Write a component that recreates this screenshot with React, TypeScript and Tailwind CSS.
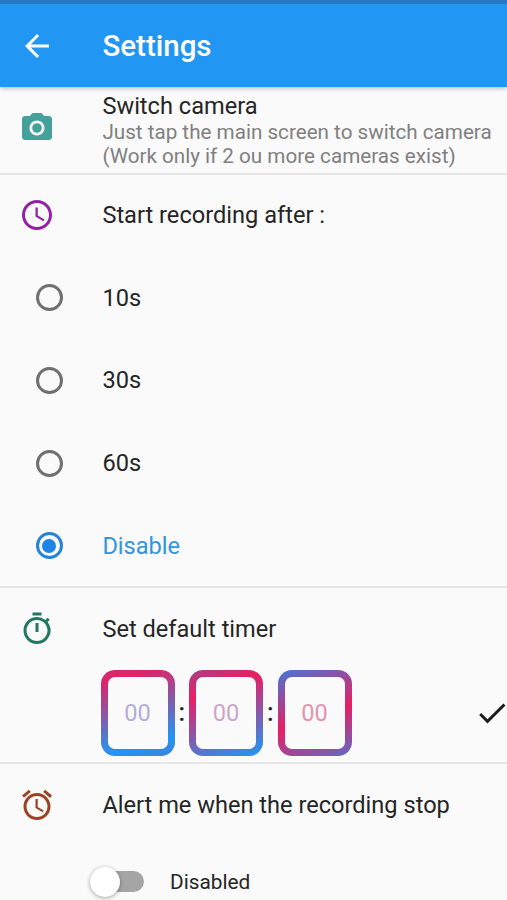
import { useState } from "react";
import type { ReactNode } from "react";
import {
  MdArrowBack,
  MdPhotoCamera,
  MdAccessTime,
  MdOutlineTimer,
  MdAlarm,
  MdCheck,
} from "react-icons/md";

const delays = ["10s", "30s", "60s", "Disable"];

const timerFields = [
  {
    frame: "bg-[linear-gradient(165deg,#cc2e72_0%,#df2468_12%,#2196f3_82%,#3f7fd8_100%)]",
    text: "text-[#b3aed6]",
  },
  {
    frame: "bg-[linear-gradient(160deg,#a8408c_0%,#e91e63_26%,#2196f3_97%)]",
    text: "text-[#cda5c8]",
  },
  {
    frame: "bg-[linear-gradient(160deg,#4478d8_0%,#e91e63_54%,#5f6cc6_100%)]",
    text: "text-[#e592ae]",
  },
];

function Row({ icon, children, className = "" }: { icon?: ReactNode; children: ReactNode; className?: string }) {
  return (
    <div className={`flex items-center ${className}`}>
      <div className="w-[83px] shrink-0">{icon}</div>
      {children}
    </div>
  );
}

export default function App() {
  const [delay, setDelay] = useState("Disable");
  const [alert, setAlert] = useState(false);

  return (
    <div className="h-[900px] w-[507px] overflow-hidden bg-[#fafafa] font-['Roboto',sans-serif] text-[23.6px] leading-7 text-[#252525]">
      <header className="relative flex h-[87px] items-center border-t-4 border-[#2679c1] bg-[#2196f3] pl-[19.4px] text-white shadow-[0_1px_5px_rgba(0,0,0,0.3)]">
        <div className="w-[83px]">
          <MdArrowBack size={36} />
        </div>
        <h1 className="pt-px text-[29.5px] font-medium">Settings</h1>
      </header>

      <Row
        className="h-[88px] border-b-2 border-[#e6e6e6] pl-[19.4px]"
        icon={<MdPhotoCamera size={36} className="mb-[5px] text-[#43a09a]" />}
      >
        <div className="whitespace-nowrap">
          <div>Switch camera</div>
          <div className="text-[20.65px] leading-6 text-[#808080]">
            Just tap the main screen to switch camera
            <br />
            (Work only if 2 ou more cameras exist)
          </div>
        </div>
      </Row>

      <section className="h-[413px] border-b-2 border-[#e6e6e6]">
        <Row className="h-[80px] pl-[19.4px]" icon={<MdAccessTime size={36} className="text-[#9320a5]" />}>
          Start recording after :
        </Row>
        <div className="pt-[1.6px]">
          {delays.map((d) => (
            <button key={d} onClick={() => setDelay(d)} className="flex h-[82.6px] w-full items-center pl-[35.5px]">
              <span
                className={`mr-[39.9px] flex size-[27px] items-center justify-center rounded-full border-3 ${
                  d === delay ? "border-[#2583dd]" : "border-[#707070]"
                }`}
              >
                {d === delay && <span className="size-[14px] rounded-full bg-[#1e83e6]" />}
              </span>
              <span className={d === delay ? "text-[#3295df]" : ""}>{d}</span>
            </button>
          ))}
        </div>
      </section>

      <section className="h-[176px] border-b-2 border-[#e6e6e6]">
        <Row className="h-[81px] pl-[19.4px]" icon={<MdOutlineTimer size={36} className="text-[#23775f]" />}>
          Set default timer
        </Row>
        <div className="flex h-[87px] items-center pl-[100.5px]">
          {timerFields.map((f, i) => (
            <div key={i} className="flex items-center">
              {i > 0 && <span className="w-[14.5px] text-center text-[25px] font-medium">:</span>}
              <div className={`h-[86px] w-[74px] rounded-[14px] p-[7px] ${f.frame}`}>
                <div className={`flex h-full items-center justify-center rounded-[7px] bg-[#fafafa] ${f.text}`}>
                  00
                </div>
              </div>
            </div>
          ))}
          <MdCheck size={36} className="ml-[122px] shrink-0 text-[#1c1c1c]" />
        </div>
      </section>

      <section>
        <Row className="h-[81px] pl-[19.4px]" icon={<MdAlarm size={36} className="text-[#9a4326]" />}>
          Alert me when the recording stop
        </Row>
        <div className="flex h-[73px] items-center pl-[90px] text-[20.8px]">
          <button
            onClick={() => setAlert(!alert)}
            className="mr-[26px] flex h-[21px] w-[54px] items-center rounded-full bg-[linear-gradient(90deg,transparent_20%,#a5a5a5_20%)]"
          >
            <span className="size-[30px] rounded-full bg-white shadow-[0_1px_4px_rgba(0,0,0,0.35)]" />
          </button>
          {alert ? "Enabled" : "Disabled"}
        </div>
      </section>
    </div>
  );
}
